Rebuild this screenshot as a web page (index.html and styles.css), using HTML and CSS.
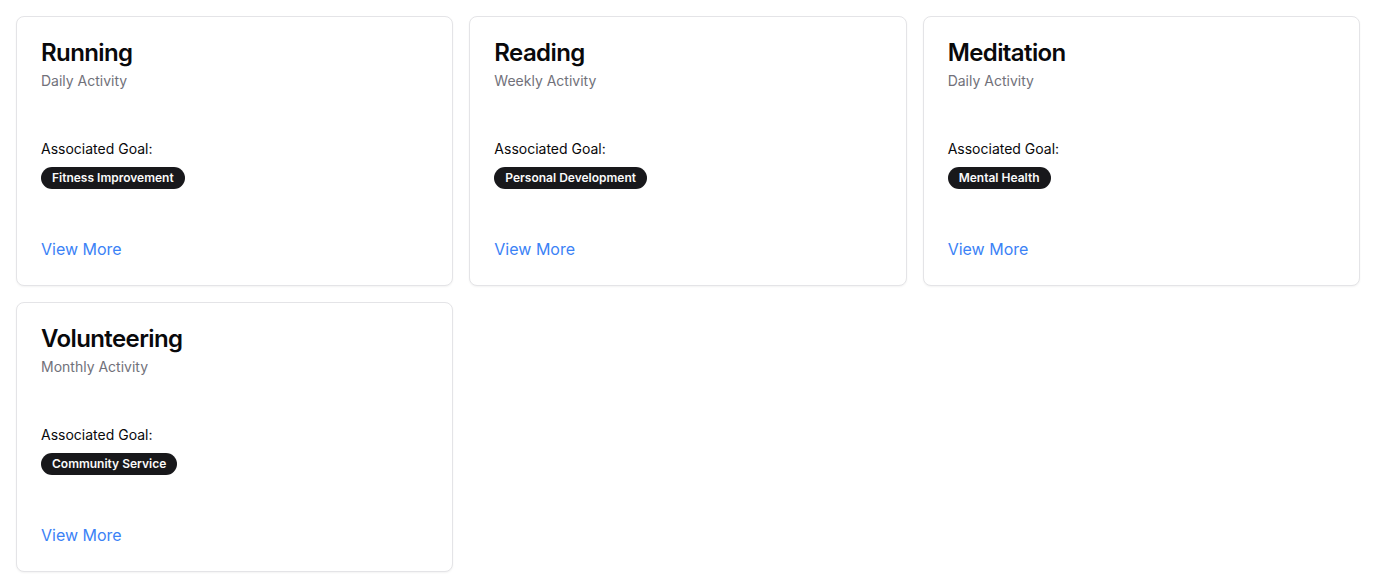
FILE: index.html
```html
<!DOCTYPE html>
<html lang="en">
<head>
<meta charset="utf-8">
<title>Activities</title>
<link rel="stylesheet" href="styles.css">
</head>
<body>
<div class="grid">
  <div class="card">
    <div class="card-header">
      <h3 class="card-title">Running</h3>
      <p class="card-desc">Daily Activity</p>
    </div>
    <div class="card-content">
      <p class="goal-label">Associated Goal:</p>
      <span class="badge">Fitness Improvement</span>
    </div>
    <div class="card-footer"><a class="link" href="#">View More</a></div>
  </div>
  <div class="card">
    <div class="card-header">
      <h3 class="card-title">Reading</h3>
      <p class="card-desc">Weekly Activity</p>
    </div>
    <div class="card-content">
      <p class="goal-label">Associated Goal:</p>
      <span class="badge">Personal Development</span>
    </div>
    <div class="card-footer"><a class="link" href="#">View More</a></div>
  </div>
  <div class="card">
    <div class="card-header">
      <h3 class="card-title">Meditation</h3>
      <p class="card-desc">Daily Activity</p>
    </div>
    <div class="card-content">
      <p class="goal-label">Associated Goal:</p>
      <span class="badge">Mental Health</span>
    </div>
    <div class="card-footer"><a class="link" href="#">View More</a></div>
  </div>
  <div class="card">
    <div class="card-header">
      <h3 class="card-title">Volunteering</h3>
      <p class="card-desc">Monthly Activity</p>
    </div>
    <div class="card-content">
      <p class="goal-label">Associated Goal:</p>
      <span class="badge">Community Service</span>
    </div>
    <div class="card-footer"><a class="link" href="#">View More</a></div>
  </div>
</div>
</body>
</html>
```

FILE: styles.css
```css
* { box-sizing: border-box; }
html, body { margin: 0; padding: 0; background: #ffffff; }
body {
  font-family: Inter, "Noto Sans", sans-serif;
  color: #09090b;
}
.grid {
  display: grid;
  grid-template-columns: repeat(3, 1fr);
  gap: 16px;
  padding: 16px;
}
.card {
  border: 1px solid #e4e4e7;
  border-radius: 8px;
  background: #fff;
  box-shadow: 0 1px 2px rgba(0,0,0,0.05);
  display: flex;
  flex-direction: column;
}
.card-header {
  padding: 24px 24px 0 24px;
  display: flex;
  flex-direction: column;
  gap: 6px;
}
.card-title {
  margin: 0;
  font-size: 24px;
  line-height: 24px;
  font-weight: 600;
  letter-spacing: -0.6px;
}
.card-desc {
  margin: 0;
  font-size: 14px;
  line-height: 20px;
  color: #71717a;
}
.card-content {
  padding: 48px 24px 0 24px;
}
.goal-label {
  margin: 0 0 7px 0;
  font-size: 14px;
  line-height: 20px;
}
.badge {
  display: inline-flex;
  align-items: center;
  border-radius: 9999px;
  background: #18181b;
  color: #fafafa;
  font-size: 12px;
  line-height: 16px;
  font-weight: 600;
  padding: 2px 10px;
  border: 1px solid transparent;
}
.card-footer {
  padding: 48px 24px 24px 24px;
  display: flex;
  align-items: center;
}
.link {
  font-size: 16px;
  line-height: 24px;
  color: #3b82f6;
  text-decoration: none;
}
```
